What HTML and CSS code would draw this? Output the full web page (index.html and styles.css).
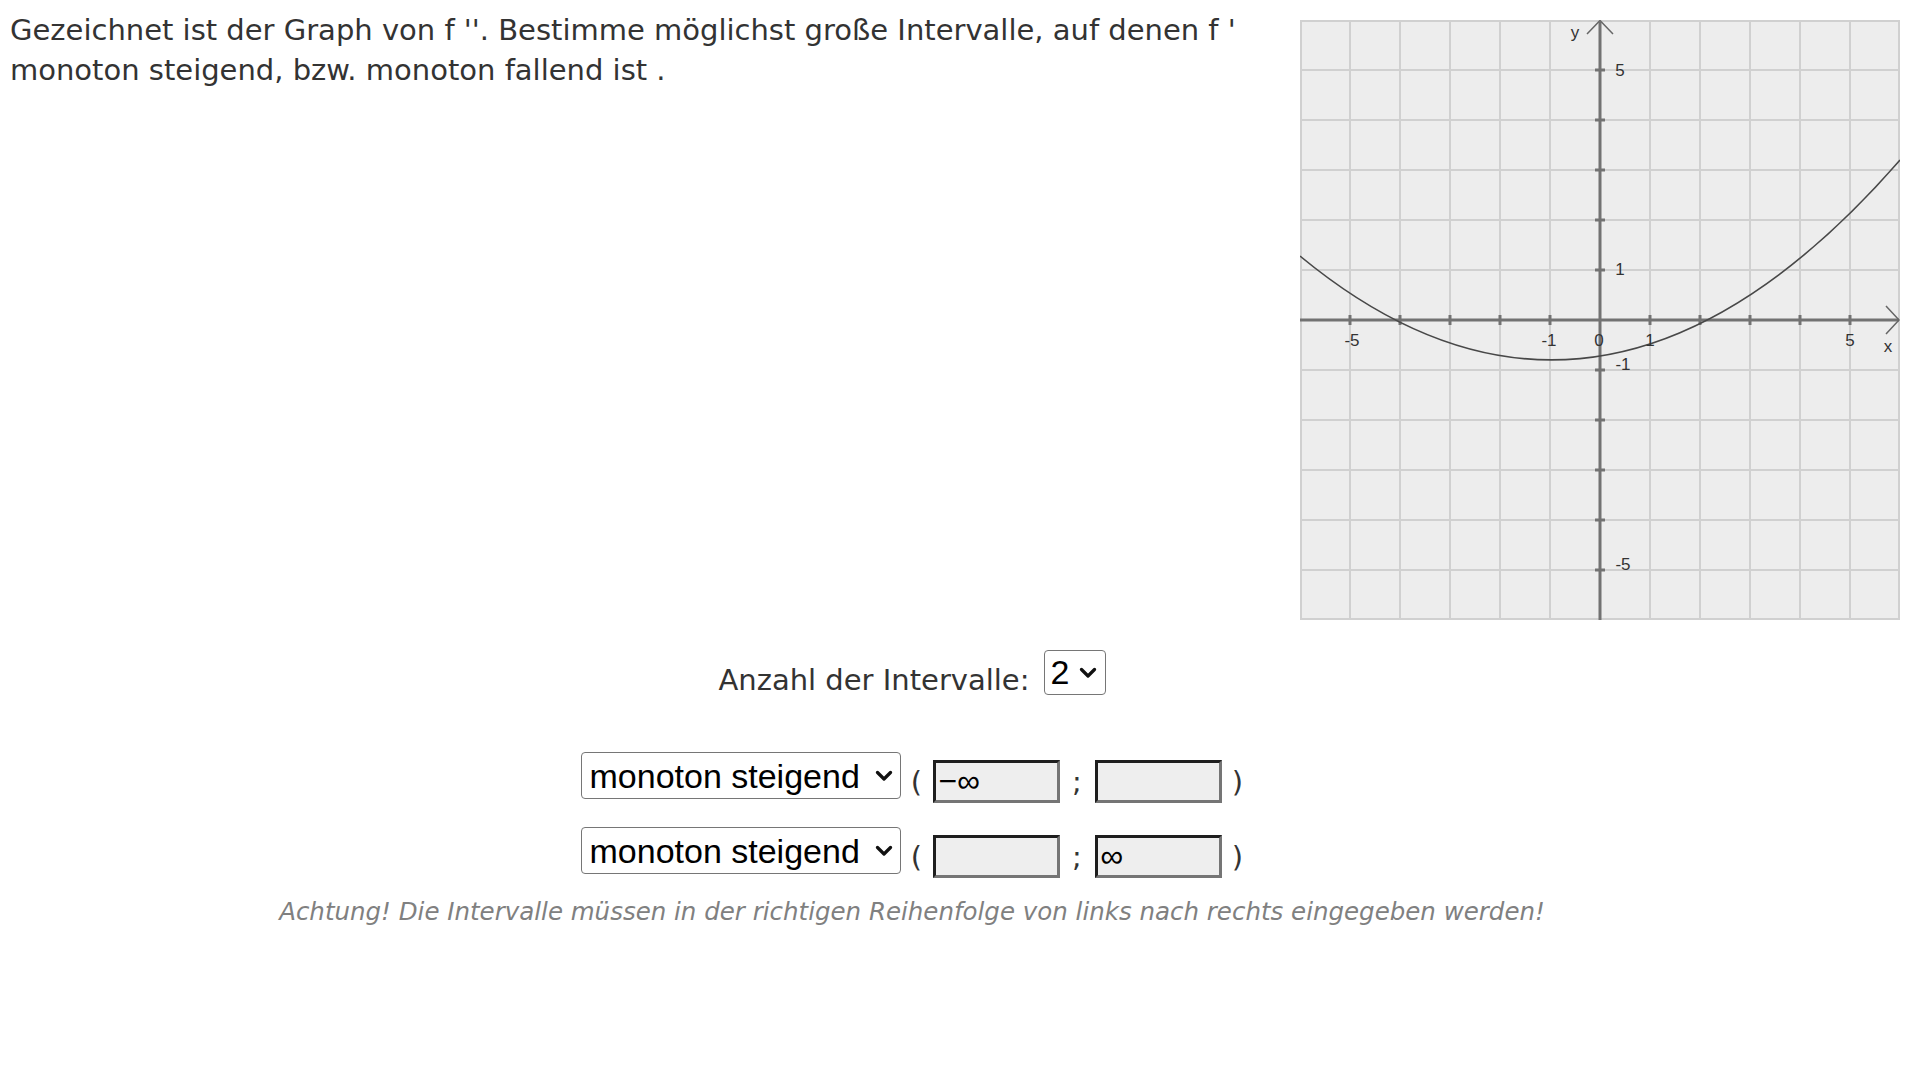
FILE: index.html
```html
<!DOCTYPE html>
<html lang="de">
<head>
<meta charset="utf-8">
<title>Aufgabe</title>
<link rel="stylesheet" href="styles.css">
</head>
<body>
<div class="top">
  <p class="question">Gezeichnet ist der Graph von f ''. Bestimme möglichst große Intervalle, auf denen f ' monoton steigend, bzw. monoton fallend ist .</p>
  <svg class="graph" width="600" height="600" viewBox="0 0 600 600" xmlns="http://www.w3.org/2000/svg">
    <rect x="0" y="0" width="600" height="600" fill="#ededed"/>
    <g stroke="#d0d0d0" stroke-width="2">
      <line x1="1" y1="0" x2="1" y2="600"/>
      <line x1="50" y1="0" x2="50" y2="600"/>
      <line x1="100" y1="0" x2="100" y2="600"/>
      <line x1="150" y1="0" x2="150" y2="600"/>
      <line x1="200" y1="0" x2="200" y2="600"/>
      <line x1="250" y1="0" x2="250" y2="600"/>
      <line x1="350" y1="0" x2="350" y2="600"/>
      <line x1="400" y1="0" x2="400" y2="600"/>
      <line x1="450" y1="0" x2="450" y2="600"/>
      <line x1="500" y1="0" x2="500" y2="600"/>
      <line x1="550" y1="0" x2="550" y2="600"/>
      <line x1="599" y1="0" x2="599" y2="600"/>
      <line x1="0" y1="1" x2="600" y2="1"/>
      <line x1="0" y1="50" x2="600" y2="50"/>
      <line x1="0" y1="100" x2="600" y2="100"/>
      <line x1="0" y1="150" x2="600" y2="150"/>
      <line x1="0" y1="200" x2="600" y2="200"/>
      <line x1="0" y1="250" x2="600" y2="250"/>
      <line x1="0" y1="350" x2="600" y2="350"/>
      <line x1="0" y1="400" x2="600" y2="400"/>
      <line x1="0" y1="450" x2="600" y2="450"/>
      <line x1="0" y1="500" x2="600" y2="500"/>
      <line x1="0" y1="550" x2="600" y2="550"/>
      <line x1="0" y1="599" x2="600" y2="599"/>
    </g>
    <g stroke="#727272" stroke-width="3" fill="none">
      <line x1="0" y1="300" x2="599" y2="300"/>
      <line x1="300" y1="2" x2="300" y2="600"/>
    </g>
    <g stroke="#727272" stroke-width="3">
      <line x1="50" y1="295" x2="50" y2="305"/>
      <line x1="100" y1="295" x2="100" y2="305"/>
      <line x1="150" y1="295" x2="150" y2="305"/>
      <line x1="200" y1="295" x2="200" y2="305"/>
      <line x1="250" y1="295" x2="250" y2="305"/>
      <line x1="350" y1="295" x2="350" y2="305"/>
      <line x1="400" y1="295" x2="400" y2="305"/>
      <line x1="450" y1="295" x2="450" y2="305"/>
      <line x1="500" y1="295" x2="500" y2="305"/>
      <line x1="550" y1="295" x2="550" y2="305"/>
      <line x1="295" y1="50" x2="305" y2="50"/>
      <line x1="295" y1="100" x2="305" y2="100"/>
      <line x1="295" y1="150" x2="305" y2="150"/>
      <line x1="295" y1="200" x2="305" y2="200"/>
      <line x1="295" y1="250" x2="305" y2="250"/>
      <line x1="295" y1="350" x2="305" y2="350"/>
      <line x1="295" y1="400" x2="305" y2="400"/>
      <line x1="295" y1="450" x2="305" y2="450"/>
      <line x1="295" y1="500" x2="305" y2="500"/>
      <line x1="295" y1="550" x2="305" y2="550"/>
    </g>
    <g stroke="#666666" stroke-width="1.5" fill="none">
      <polyline points="287,14 300,0.5 313,14"/>
      <polyline points="586,286 599,300 586,314"/>
    </g>
    <path fill="none" stroke="#484848" stroke-width="1.6" d="M0,236 Q300,484 600,140"/>
    <g class="lbl">
      <text x="52" y="326" text-anchor="middle">-5</text>
      <text x="249" y="326" text-anchor="middle">-1</text>
      <text x="299" y="326" text-anchor="middle">0</text>
      <text x="350" y="326" text-anchor="middle">1</text>
      <text x="550" y="326" text-anchor="middle">5</text>
      <text x="588" y="332" text-anchor="middle">x</text>
      <text x="320" y="56" text-anchor="middle">5</text>
      <text x="320" y="255" text-anchor="middle">1</text>
      <text x="323" y="350" text-anchor="middle">-1</text>
      <text x="323" y="550" text-anchor="middle">-5</text>
      <text x="275" y="18" text-anchor="middle">y</text>
    </g>
  </svg>
</div>

<div class="lower">
  <div class="count-row">
    <span class="count-label">Anzahl der Intervalle:</span>
    <select class="sel sel-count"><option>1</option><option selected>2</option><option>3</option></select>
  </div>

  <div class="interval-row">
    <select class="sel sel-mono"><option selected>monoton steigend</option><option>monoton fallend</option></select>
    <span class="paren">(</span>
    <input class="bound" type="text" value="−∞">
    <span class="semi">;</span>
    <input class="bound" type="text" value="">
    <span class="paren">)</span>
  </div>

  <div class="interval-row">
    <select class="sel sel-mono"><option selected>monoton steigend</option><option>monoton fallend</option></select>
    <span class="paren">(</span>
    <input class="bound" type="text" value="">
    <span class="semi">;</span>
    <input class="bound" type="text" value="∞">
    <span class="paren">)</span>
  </div>

  <p class="warning">Achtung! Die Intervalle müssen in der richtigen Reihenfolge von links nach rechts eingegeben werden!</p>
</div>
</body>
</html>
```

FILE: styles.css
```css
html, body {
  background: #ffffff;
}

body {
  margin: 8px;
  font-family: "DejaVu Sans", Verdana, sans-serif;
  color: #333333;
}

.top {
  display: flex;
  justify-content: space-between;
  align-items: flex-start;
}

.question {
  margin: 2px 0 0 2px;
  width: 1270px;
  font-size: 29px;
  line-height: 40px;
}

.graph {
  display: block;
  margin: 12px 12px 0 0;
  flex: none;
}

.lbl text {
  font-family: "Liberation Sans", Arial, sans-serif;
  font-size: 17px;
  fill: #333333;
}

.lower {
  width: 1808px;
  display: flex;
  flex-direction: column;
  align-items: center;
}

.count-row {
  display: flex;
  align-items: center;
  margin-top: 27px;
}

.count-label {
  font-size: 29px;
  margin-right: 14px;
  padding-top: 16px;
}

.sel {
  appearance: none;
  -webkit-appearance: none;
  font-family: "Liberation Sans", Arial, sans-serif;
  color: #000000;
  background-color: #ffffff;
  background-image: url("data:image/svg+xml,%3Csvg xmlns='http://www.w3.org/2000/svg' width='18' height='11' viewBox='0 0 18 11'%3E%3Cpath d='M2.5 2.5 L9 9 L15.5 2.5' fill='none' stroke='%23111' stroke-width='3.2' stroke-linecap='round' stroke-linejoin='round'/%3E%3C/svg%3E");
  background-repeat: no-repeat;
  border: 1px solid #767676;
  border-radius: 4px;
  margin: 0;
}

.sel-count {
  width: 62px;
  height: 45px;
  font-size: 34px;
  padding: 0 0 0 6px;
  background-position: right 8px center;
}

.interval-row {
  display: flex;
  align-items: flex-start;
  margin-top: 55px;
  padding-left: 10px;
}

.interval-row + .interval-row {
  margin-top: 24px;
}

.sel-mono {
  width: 320px;
  height: 47px;
  font-size: 34px;
  padding: 0 0 0 8px;
  background-position: right 7px center;
}

.paren,
.semi {
  display: block;
  font-size: 29px;
  line-height: 34px;
  margin-top: 13px;
  text-align: center;
}

.paren {
  width: 32px;
}

.semi {
  width: 35px;
}

.bound {
  box-sizing: border-box;
  width: 127px;
  height: 43px;
  margin: 8px 0 0 0;
  padding: 0 3px;
  background: #eeeeee;
  border-style: solid;
  border-width: 3px;
  border-color: #1e1e1e #757575 #757575 #1e1e1e;
  font-family: "Liberation Sans", Arial, sans-serif;
  font-size: 32px;
  color: #000000;
  outline: none;
}

.warning {
  margin: 19px 0 0 0;
  font-size: 24.5px;
  font-style: italic;
  color: #808080;
}
```
